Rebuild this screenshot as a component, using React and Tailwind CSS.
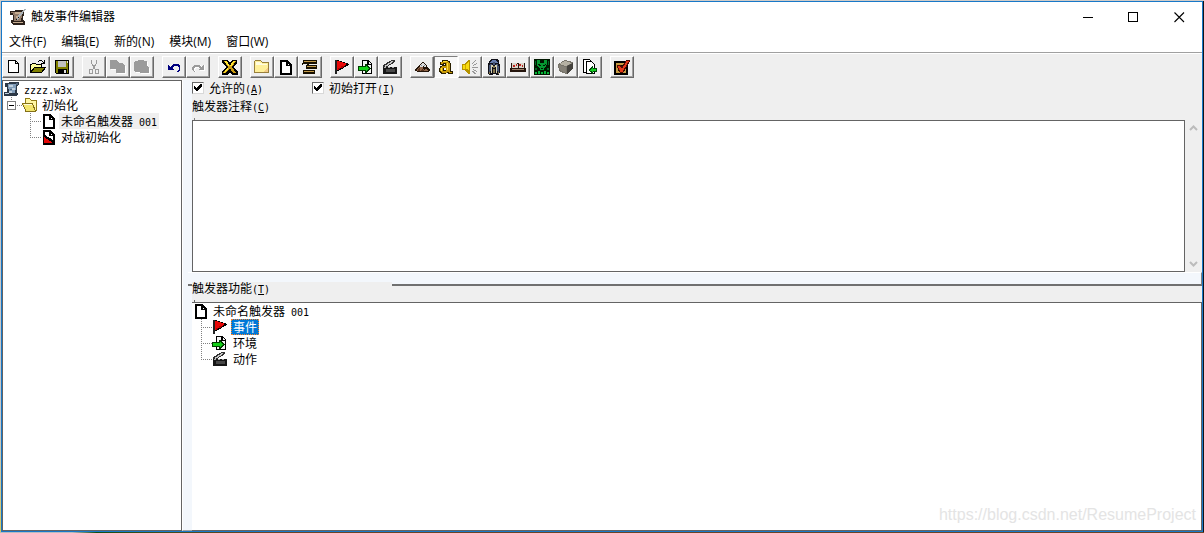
import { useState } from "react";

const menus = [
  ["文件", "F"],
  ["编辑", "E"],
  ["新的", "N"],
  ["模块", "M"],
  ["窗口", "W"],
];

const toolGroups = [
  ["new", "open", "save"],
  ["cut", "copy", "paste"],
  ["undo", "redo"],
  ["variables"],
  ["folder", "page", "comment"],
  ["flag", "condition", "clapper"],
];

const moduleTools = ["terrain", "letter", "sound", "unit", "campaign", "ai", "object", "import"];

const toolNames = {
  new: "新建",
  open: "打开",
  save: "保存",
  cut: "剪切",
  copy: "复制",
  paste: "粘贴",
  undo: "撤销",
  redo: "重做",
  variables: "变量",
  folder: "新目录",
  page: "新触发器",
  comment: "新注释",
  flag: "新事件",
  condition: "新环境",
  clapper: "新动作",
  terrain: "地形编辑器",
  letter: "触发事件编辑器",
  sound: "声音编辑器",
  unit: "物体编辑器",
  campaign: "战役编辑器",
  ai: "AI编辑器",
  object: "物体管理器",
  import: "输入管理器",
  test: "测试地图",
};

// All drawings use a 16x16 grid, one unit per screen pixel
const drawings = {
  new: <path d="M2.5 1.5h7l3 3v9h-10zM9.5 1.5v3h3" fill="#fff" stroke="#000" />,
  open: (
    <>
      <path d="M0.5 13.5v-8h1l1-1h3l1 1h5v3" fill="#ffff9c" stroke="#000" />
      <path d="M0.5 13.5l4-5h11l-4 5z" fill="#808000" stroke="#000" />
      <path d="M8 2h1v-1h3v1h1v1h1v-2h1v4h-4v-1h2v-1h-1v-1h-3v1h-1z" fill="#000" />
    </>
  ),
  save: (
    <>
      <path d="M1.5 1.5h13v13h-12l-1-1z" fill="#808000" stroke="#000" />
      <path d="M4 2h8v6h-8z" fill="#c0c0c0" />
      <path d="M4 10h9v5h-9z" fill="#000" />
      <path d="M10 11h2v3h-2zM13 2h1v2h-1z" fill="#e0e0e0" />
    </>
  ),
  cut: (
    <g stroke="#9b9b9b" fill="none">
      <path d="M5.5 1v3l3 5 1 2M10.5 1v3l-3 5-1 2" />
      <path d="M3.5 10.5h3v4h-3zM9.5 10.5h3v4h-3z" />
    </g>
  ),
  copy: (
    <>
      <path d="M1 2h6l3 3h3l3 3v7h-9v-4h-6z" fill="#fff" />
      <path d="M0 1h6l3 3h3l3 3v7h-9v-4h-6z" fill="#9b9b9b" />
    </>
  ),
  paste: (
    <>
      <path d="M2 3h3v-1h6v1h3v5l2 2v5h-9v-1h-5l-1-1v-9z" fill="#fff" />
      <path d="M1 2h3v-1h6v1h3v5l2 2v5h-9v-1h-5l-1-1v-9z" fill="#9b9b9b" />
    </>
  ),
  undo: <path d="M2 5v6h6l-2-2 1-1h1v-1h3l1 1h1v2l-1 2h-1v1h1l2-2v-4l-2-2h-5l-3 3z" fill="#000080" />,
  redo: (
    <>
      <path d="M15 6v6h-6l2-2-1-1h-4l-1 2 1 2h-1l-2-2v-3l2-2h5l2 2z" fill="#fff" />
      <path d="M14 5v6h-6l2-2-2-1h-3l-1 2 1 3h-1l-2-2v-3l2-2h5l2 2z" fill="#9b9b9b" />
    </>
  ),
  variables: (
    <>
      <path d="M0 1h6l2 3 2-3h5v3l-3 4 4 5v3h-6l-2-3-3 3h-5v-3l4-5-4-4z" fill="#000" />
      <path d="M2 2h3l3 5 3-5h3l-4 6 4 6h-3l-3-5-4 5h-3l5-6z" fill="#c89a10" />
      <path d="M2 2h3l2 4-1 1-3-4zM11 2h2l-4 6-1-1zM5 9l1 1-3 4h-1z" fill="#ffe430" />
    </>
  ),
  folder: (
    <>
      <path d="M0.5 13.5v-11l1-1h5l2 2h6v10z" fill="#fff09a" stroke="#98803c" />
      <path d="M2 3h4v1h2v1h5v1h-11z" fill="#fffce0" />
      <path d="M9 13l5-5v5z" fill="#f4cc88" />
    </>
  ),
  page: (
    <>
      <path d="M3 2h6l4 4v9h-10z" fill="#fff" stroke="#000" strokeWidth="2" />
      <path d="M8 2h2v4h4v1h-6z" fill="#000" />
    </>
  ),
  comment: (
    <>
      <path d="M1 1h14v4h-14zM4 6h11v4h-11zM1 11h12v4h-12z" fill="#171000" />
      <path d="M2 2h12v1h-12zM5 7h9v1h-9zM2 12h10v1h-10z" fill="#c39a48" />
      <path d="M0 4h1v2h-1zM5 5h2v1h-2z" fill="#171000" />
    </>
  ),
  flag: (
    <>
      <path d="M1 1h2v14h-2z" fill="#222" />
      <path d="M3 1h1l11 4v1l-11 6h-1z" fill="#000" />
      <path d="M3 2h1l9 3-3 2-6 4h-1z" fill="#e80808" />
      <path d="M4 9h3l-3 2zM7 7h3l-2 2h-1z" fill="#b00000" />
    </>
  ),
  condition: (
    <>
      <path d="M4.5 1.5h6l3 3v10h-9z" fill="#f4f4f4" stroke="#000" />
      <path d="M9 2h2v3h3v1h-5z" fill="#000" />
      <path d="M13 6h1v9h-9v-1h8z" fill="#000" />
      <path d="M0 7h7v-2h1l5 4v1l-5 4h-1v-2h-7z" fill="#003b00" />
      <path d="M1 8h7v-1l3 2v1l-3 2v-1h-7z" fill="#13d018" />
    </>
  ),
  clapper: (
    <>
      <path d="M1 6l9-5h3v2l-8 5h-4z" fill="#303030" />
      <path d="M3 6h2l-1 2h-1zM6 4h2l-2 3h-1zM9 2h2l-2 3h-1z" fill="#c8c8c8" />
      <path d="M1 8h14v7h-14z" fill="#161616" />
      <path d="M2 8h2v1h-2zM6 8h2v1h-2zM10 8h2v1h-2z" fill="#a8a8a8" />
      <path d="M4 10h9v3h-9z" fill="#484848" />
    </>
  ),
  terrain: (
    <>
      <path d="M0 11l3-3 3-3 2-2h1l4 4 3 4v1l-3 1h-9z" fill="#231409" />
      <path d="M2 11l4-4h2l2 4 2-2 2 3h-11z" fill="#91664a" />
      <path d="M5 7l3-3h1l3 3-1 1-2-1-1 2-1-2-1 1z" fill="#dedede" />
      <path d="M7 6h1v1h-1zM10 6h1v1h-1z" fill="#80919d" />
      <path d="M5 9h1v3h-2zM8 10l2 2h-3z" fill="#5c3720" />
    </>
  ),
  letter: (
    <>
      <path
        fillRule="evenodd"
        d="M4 1h6v1h2v2h1v8h2v3h-5v-1h-2v1h-5v-1h-1v-1h-1v-4h1v-2h2v-1h3v-1h-1v1h-4v-3h2zM6 9h2v2h-2z"
        fill="#2a2000"
      />
      <path
        fillRule="evenodd"
        d="M5 2h5v1h1v1h1v9h2v1h-3v-1h-2v1h-5v-1h-1v-1h-1v-3h1v-1h1v-1h4v-3h-3v1h-2v-2h1zM5 9h3v3h-3z"
        fill="#c99b08"
      />
      <path d="M5 2h4v1h-4zM9 4h1v7h-1zM3 9h1v3h-1z" fill="#ffe333" />
    </>
  ),
  sound: (
    <>
      <path d="M0 5h3v-1h1v-1h1v-1h1v-1h2v14h-2v-1h-1v-1h-1v-1h-1v-1h-3z" fill="#b59300" />
      <path d="M1 6h3v-1h1v-1h1v-1h1v8h-1v-1h-5z" fill="#f8dc10" />
      <path d="M3 6h1v4h-1z" fill="#d0aa00" />
      <path d="M10 5l4-4M11 6.5l4-2M10 8.5h6M11 10.5l4 2M10 12l4 3" stroke="#999" fill="none" />
    </>
  ),
  unit: (
    <>
      <path d="M5 0h6l2 2 1 5v6l-1 3h-3l-1-1h-2l-1 1h-3l-1-3v-6l1-5z" fill="#101018" />
      <path d="M6 1h4l2 3h-8z" fill="#677dad" />
      <path d="M4 5h2v3l-2 5h-1v-5zM10 5h2l1 4v4h-1l-2-5zM7 3h2v3h-2z" fill="#455373" />
      <path d="M5 6h2v2h-1v6h-1zM9 6h2v8h-1v-6h-1z" fill="#d5d2b3" />
      <path d="M7 7h2v2h-2zM7 10h2v4h-2zM3 13h1v2h-1zM12 13h1v2h-1z" fill="#85754c" />
    </>
  ),
  campaign: (
    <>
      <path d="M1 4h14v5h1v4h-16v-4h1z" fill="#25150d" />
      <path d="M2 4h5v5h-5zM9 4h5v5h-5z" fill="#dad5ca" />
      <path d="M3 6h2v2h-2zM6 5h1v2h-1zM9 5h2v2h-2zM12 6h1v2h-1z" fill="#bb251e" />
      <path d="M7 5h1v4h-1z" fill="#dad5ca" />
      <path d="M2 10h12v1h-12z" fill="#9d816b" />
    </>
  ),
  ai: (
    <>
      <path d="M0 0h16v16h-16z" fill="#001700" />
      <path d="M3 1h3v2l2 1 2-1v-2h3v4l-1 3-2 1v2h-4v-2l-2-1-1-3z" fill="#059a32" />
      <path d="M4 5l3 1v1h-2zM12 5l-3 1v1h2zM7 9h2v1h-2zM6 2h1v2h-1zM9 2h1v2h-1z" fill="#001700" />
      <path d="M1 2h1v4h-1zM14 2h1v4h-1zM1 9h2v2h-2zM13 9h2v2h-2z" fill="#006924" />
      <path d="M1 13h2v2h-2zM4 12h2v3h-2zM7 13h2v2h-2zM10 12h2v3h-2zM13 13h2v2h-2z" fill="#05b537" />
    </>
  ),
  object: (
    <>
      <path d="M0 5l7-4 8 2v7l-7 5-7-3z" fill="#77746a" />
      <path d="M1 5l6-3 7 2-6 3z" fill="#b5b1a3" />
      <path d="M9 7l6-3v6l-6 5z" fill="#45433e" />
      <path d="M1 6l7 2v6l-6-3z" fill="#858177" />
    </>
  ),
  import: (
    <>
      <path d="M1.5 0.5h6l3 3v10h-9z" fill="#fff" stroke="#000" />
      <path d="M4.5 2.5h5l3 3v9h-8z" fill="#fff" stroke="#000" />
      <path d="M7 10h1v-1h1v-1h1v-1h1v2h4v4h-4v2h-1v-1h-1v-1h-1v-1h-1z" fill="#004809" />
      <path d="M8 11h1v-1h1v-1h1v1h3v2h-3v1h-1v-1h-2z" fill="#12d020" />
    </>
  ),
  test: (
    <>
      <path d="M1 3h12v12h-12z" fill="#c69b42" stroke="#000" strokeWidth="2" />
      <path d="M4 6h7v6h-7z" fill="#160c00" />
      <path d="M3 7l3-1 2 3 4-7 4-1-7 12h-3z" fill="#e53818" stroke="#500b00" />
    </>
  ),
  scroll: (
    <>
      <path d="M0 2h4l1-1h8l1 3-1 7 2 2v3h-12l-2-2v-3h2v-5h-3z" fill="#2c211b" />
      <path d="M1 3h11v3l-1 6h-7v-5l-1-3h-2z" fill="#937b69" />
      <path d="M5 3h6v2h-6zM6 7h3v2h-3zM3 13h10v1h-10z" fill="#c7ad92" />
      <path d="M15 0h1l-6 8-3 3 1-4 5-6z" fill="#aab1b5" />
      <path d="M8 8h1v1h-1zM6 10h1v1h-1z" fill="#111" />
    </>
  ),
  map: (
    <>
      <path d="M1 2h3l1-1h10v3l-2 1v5l1 3-2 2h-12v-4h3v-5h-2z" fill="#2c3846" />
      <path d="M4 3h8v3l-1 6h-6v-3l-1-3z" fill="#829eba" />
      <path d="M5 4h4v2h-4zM8 7h3v2h-3zM5 10h3v2h-3zM1 12h4v1h-4z" fill="#c0d0dd" />
      <path d="M12 2h2v2h-2zM6 8h2v1h-2z" fill="#53687e" />
    </>
  ),
  folderOpen: (
    <>
      <path d="M3.5 13.5v-12h4l2 2h5v10z" fill="#fff6a2" stroke="#907b18" />
      <path d="M4 14.5l-3.5-8h10l3 8z" fill="#f2e56d" stroke="#847018" />
      <path d="M2 7h8v1h-8z" fill="#fffcd5" />
    </>
  ),
  melee: (
    <>
      <path d="M3 2h6l4 4v9h-10z" fill="#fff" stroke="#000" strokeWidth="2" />
      <path d="M8 2h2v4h4v1h-6z" fill="#000" />
      <path d="M2 6h2l10 6v4h-12z" fill="#000" />
      <path d="M3 8l9 6h-9z" fill="#e40808" />
    </>
  ),
};

function Icon({ name }) {
  return (
    <svg viewBox="0 0 16 16" className="size-4 shrink-0" shapeRendering="crispEdges" aria-hidden="true">
      {drawings[name]}
    </svg>
  );
}

// Half-width characters are set smaller so that two of them fill one Chinese character
function Half({ children }) {
  return <span className="font-['DejaVu_Sans_Mono',monospace] text-[10px] leading-none">{children}</span>;
}

function KeyLabel({ text, hotkey }) {
  return (
    <span className="whitespace-nowrap">
      {text}
      <Half>
        (<u>{hotkey}</u>)
      </Half>
    </span>
  );
}

function ToolButton({ name, pressed = false }) {
  return (
    <button
      type="button"
      title={toolNames[name]}
      aria-label={toolNames[name]}
      aria-pressed={pressed}
      className={`flex h-[22px] w-6 items-center justify-center border ${
        pressed
          ? "border-t-[#808080] border-l-[#808080] border-r-white border-b-white bg-[#f8f8f8]"
          : "border-t-white border-l-white border-r-[#696969] border-b-[#696969] bg-[#efefef] shadow-[inset_-1px_-1px_#a0a0a0]"
      }`}
    >
      <Icon name={name} />
    </button>
  );
}

function ToolGroup({ tools, active }) {
  return (
    <div className="flex">
      {tools.map((name) => (
        <ToolButton key={name} name={name} pressed={name === active} />
      ))}
    </div>
  );
}

function CheckBox({ id, text, hotkey, checked, onChange }) {
  return (
    <div className="flex h-4 w-[120px] items-center gap-1">
      <span className="relative flex">
        <input
          id={id}
          type="checkbox"
          checked={checked}
          onChange={(e) => onChange(e.target.checked)}
          className="peer size-3 appearance-none border border-t-[#696969] border-l-[#696969] border-r-[#d8d8d8] border-b-[#d8d8d8] bg-white"
        />
        <svg
          viewBox="0 0 12 12"
          className="pointer-events-none absolute inset-0 hidden size-3 peer-checked:block"
          shapeRendering="crispEdges"
        >
          <path d="M2 4h1v1h1v1h1v-1h1v-1h1v-1h1v-1h2v3h-1v1h-1v1h-1v1h-1v1h-2v-1h-1v-1h-1z" fill="#000" />
        </svg>
      </span>
      <label htmlFor={id} className="pl-px">
        <KeyLabel text={text} hotkey={hotkey} />
      </label>
    </div>
  );
}

function Branch({ last = false }) {
  return (
    <svg width="11" height="16" className="shrink-0" shapeRendering="crispEdges" aria-hidden="true">
      <path
        d={last ? "M0.5 0v9M0 8.5h11" : "M0.5 0v16M0 8.5h11"}
        stroke="#808080"
        strokeDasharray="1 1"
        fill="none"
      />
    </svg>
  );
}

function MapTree() {
  const [open, setOpen] = useState(true);
  return (
    <div className="w-[180px] shrink-0 border border-[#646464] bg-white leading-4">
      <div className="flex h-4 gap-1 pl-px">
        <Icon name="map" />
        <span>
          <Half>zzzz.w3x</Half>
        </span>
      </div>
      <div className="flex h-4">
        <button type="button" aria-expanded={open} aria-label="初始化" onClick={() => setOpen(!open)}>
          <svg width="19" height="16" shapeRendering="crispEdges">
            <path d="M8.5 0v4M14 8.5h5" stroke="#808080" strokeDasharray="1 1" />
            <path d="M4.5 4.5h8v8h-8z" fill="#fff" stroke="#808080" />
            <path d={open ? "M6 8.5h5" : "M6 8.5h5M8.5 6v5"} stroke="#000" />
          </svg>
        </button>
        <Icon name="folderOpen" />
        <span className="pl-1">初始化</span>
      </div>
      {open && (
        <ul className="pl-[27px]">
          <li className="flex h-4">
            <Branch />
            <Icon name="page" />
            <span className="ml-0.5 bg-[#efefef] px-0.5 whitespace-pre">
              未命名触发器<Half> 001</Half>
            </span>
          </li>
          <li className="flex h-4">
            <Branch last />
            <Icon name="melee" />
            <span className="pl-1">对战初始化</span>
          </li>
        </ul>
      )}
    </div>
  );
}

function FunctionTree() {
  const [selected, setSelected] = useState("事件");
  const items = [
    ["事件", "flag"],
    ["环境", "condition"],
    ["动作", "clapper"],
  ];
  return (
    <div className="flex-1 border-t border-r border-b border-[#646464] bg-white leading-4">
      <div className="flex h-4 pl-px">
        <Icon name="page" />
        <span className="pl-1 whitespace-pre">
          未命名触发器<Half> 001</Half>
        </span>
      </div>
      <ul className="pl-[9px]">
        {items.map(([text, icon], i) => (
          <li key={text} className="flex h-4">
            <Branch last={i === items.length - 1} />
            <Icon name={icon} />
            <button
              type="button"
              onClick={() => setSelected(text)}
              className={`ml-[3px] h-4 border px-px leading-[14px] ${
                selected === text
                  ? "border-dotted border-[#ff8728] bg-[#0078d7] text-white"
                  : "border-transparent"
              }`}
            >
              {text}
            </button>
          </li>
        ))}
      </ul>
    </div>
  );
}

function WindowButtons() {
  return (
    <div className="flex">
      <button type="button" aria-label="最小化" className="flex h-7 w-[45px] items-center justify-center">
        <svg width="11" height="11" shapeRendering="crispEdges">
          <path d="M0 5.5h10" stroke="#000" />
        </svg>
      </button>
      <button type="button" aria-label="最大化" className="flex h-7 w-[45px] items-center justify-center">
        <svg width="11" height="11" shapeRendering="crispEdges">
          <path d="M0.5 0.5h9v9h-9z" fill="none" stroke="#000" />
        </svg>
      </button>
      <button type="button" aria-label="关闭" className="flex h-7 w-[46px] items-center justify-center">
        <svg width="11" height="11">
          <path d="M0.5 0.5l9.5 9.5M10 0.5l-9.5 9.5" stroke="#000" strokeWidth="1.1" />
        </svg>
      </button>
    </div>
  );
}

function App() {
  const [enabled, setEnabled] = useState(true);
  const [initiallyOn, setInitiallyOn] = useState(true);

  return (
    <div className="relative flex h-screen flex-col font-['Liberation_Sans','Noto_Sans_CJK_SC',sans-serif] text-xs text-black">
      <div className="h-px shrink-0 bg-[#d0ccc8]" />
      <div className="flex min-h-0 flex-1">
        {/* Desktop edge */}
        <div className="w-px shrink-0 bg-linear-to-b from-[#c8c8c8] from-80% to-[#d8c860]" />
        <div className="flex min-w-0 flex-1 flex-col border border-[#1878c8] bg-[#efefef]">
          {/* Title bar */}
          <header className="flex h-[30px] shrink-0 items-center justify-between bg-white pl-2">
            <h1 className="flex items-center gap-1 leading-5">
              <Icon name="scroll" />
              <span className="pl-px">触发事件编辑器</span>
            </h1>
            <WindowButtons />
          </header>

          <nav className="flex h-5 shrink-0 gap-px bg-white font-['Open_Sans','Noto_Sans_CJK_SC',sans-serif] leading-5">
            {menus.map(([text, key]) => (
              <button key={key} type="button" className="px-[7px]">
                {text}({key})
              </button>
            ))}
          </nav>
          <div className="h-0.5 shrink-0 border-t border-[#a0a0a0] bg-white" />

          <div className="flex h-[26px] shrink-0 items-center gap-2">
            {toolGroups.map((tools) => (
              <ToolGroup key={tools[0]} tools={tools} />
            ))}
            <ToolGroup tools={moduleTools} active="letter" />
            <ToolGroup tools={["test"]} />
          </div>

          <main className="flex min-h-0 flex-1 font-['Noto_Sans_CJK_SC',sans-serif]">
            <MapTree />
            <div className="w-2.5 shrink-0 border-b border-l border-b-[#a0a0a0] border-l-white bg-[#f3f7fc]" />

            <div className="flex min-w-0 flex-1 flex-col leading-4">
              <div className="flex">
                <CheckBox id="enabled" text="允许的" hotkey="A" checked={enabled} onChange={setEnabled} />
                <CheckBox
                  id="initially-on"
                  text="初始打开"
                  hotkey="I"
                  checked={initiallyOn}
                  onChange={setInitiallyOn}
                />
              </div>
              <div className="flex h-6 shrink-0 flex-col justify-between pt-0.5">
                <label htmlFor="comment" className="h-4">
                  <KeyLabel text="触发器注释" hotkey="C" />
                </label>
                <span className="ml-0.5 h-0.5 w-px bg-[#808080]" />
              </div>
              <div className="flex h-[152px] shrink-0">
                <textarea
                  id="comment"
                  className="min-w-0 flex-1 resize-none border border-[#646464] bg-white p-0.5 outline-none"
                />
                <div className="flex w-[17px] flex-col items-center justify-between py-1 text-[#bcbcbc]">
                  <button type="button" aria-label="向上滚动">
                    <svg width="9" height="9" className="block">
                      <path d="M1 6l3.5-3.5L8 6" fill="none" stroke="currentColor" strokeWidth="2" />
                    </svg>
                  </button>
                  <button type="button" aria-label="向下滚动">
                    <svg width="9" height="9" className="block">
                      <path d="M1 3l3.5 3.5L8 3" fill="none" stroke="currentColor" strokeWidth="2" />
                    </svg>
                  </button>
                </div>
              </div>
              {/* Splitter, partly covered by the label below it */}
              <div className="-ml-1 h-3.5 shrink-0 border-t border-r border-b-2 border-t-white border-r-[#808080] border-b-[#707070] bg-[#f3f7fc]" />
              <div className="relative -mt-1 flex h-5 w-[200px] shrink-0 flex-col justify-between bg-[#efefef]">
                <h2 className="h-3 leading-3">
                  <KeyLabel text="触发器功能" hotkey="T" />
                </h2>
                <span className="ml-0.5 h-0.5 w-px bg-[#646464]" />
              </div>
              <FunctionTree />
            </div>
          </main>
        </div>
        <div className="w-px shrink-0 bg-[#101418]" />
      </div>
      <div className="h-px shrink-0 bg-linear-to-r from-[#b8bcc0] from-6% via-[#0c5014] via-8% to-[#6b4426] to-22%" />
      <div className="pointer-events-none absolute right-2 bottom-2 font-['Liberation_Sans',sans-serif] text-base leading-5 text-[#e4e4e4]">
        https://blog.csdn.net/ResumeProject
      </div>
    </div>
  );
}

export default App;
